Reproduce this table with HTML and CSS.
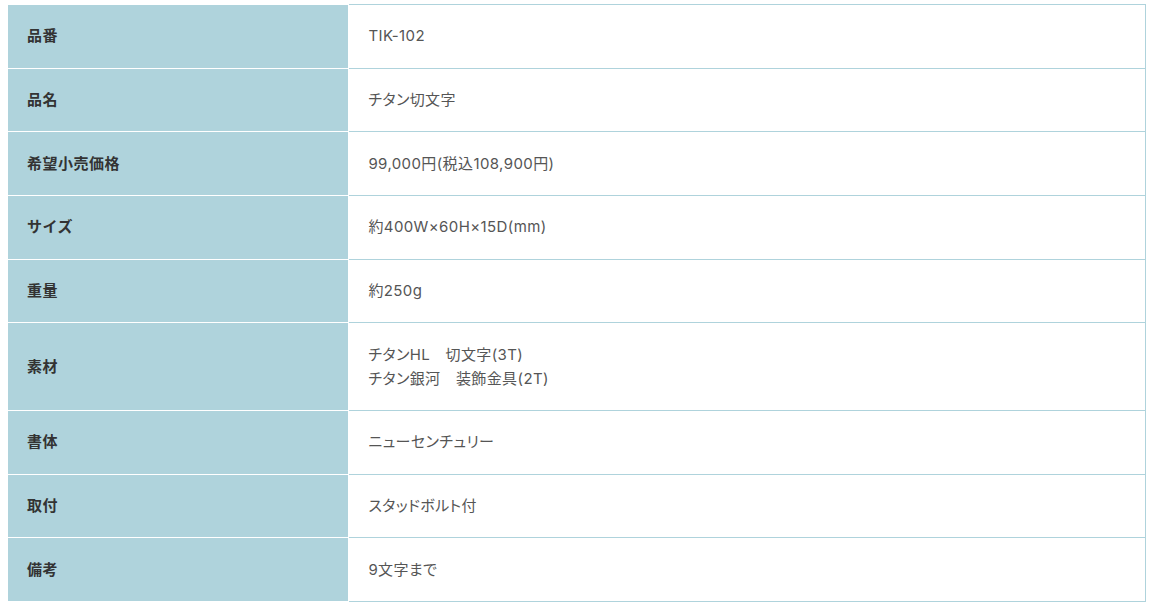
FILE: index.html
```html
<!DOCTYPE html>
<html lang="ja">
<head>
<meta charset="utf-8">
<title>仕様</title>
<link rel="stylesheet" href="styles.css">
</head>
<body>
<div class="wrap">
<table class="spec">
<tbody>
<tr><th>品番</th><td>TIK-102</td></tr>
<tr><th>品名</th><td>チタン切文字</td></tr>
<tr><th>希望小売価格</th><td>99,000円(税込108,900円)</td></tr>
<tr><th>サイズ</th><td>約400W×60H×15D(mm)</td></tr>
<tr><th>重量</th><td>約250g</td></tr>
<tr><th>素材</th><td>チタンHL　切文字(3T)<br>チタン銀河　装飾金具(2T)</td></tr>
<tr><th>書体</th><td>ニューセンチュリー</td></tr>
<tr><th>取付</th><td>スタッドボルト付</td></tr>
<tr><th>備考</th><td>9文字まで</td></tr>
</tbody>
</table>
</div>
</body>
</html>
```
FILE: styles.css
```css
html, body {
  margin: 0;
  padding: 0;
  background: #ffffff;
}
.wrap {
  padding: 4px 8px 0 7px;
}
.spec {
  width: 100%;
  border-collapse: collapse;
  font-family: "Inter", "Noto Sans CJK JP", sans-serif;
  font-size: 15px;
  line-height: 24px;
  color: #444444;
}
.spec th,
.spec td {
  padding: 19.33px 20px 19.33px 19px;
  text-align: left;
  vertical-align: middle;
}
.spec th {
  width: 30%;
  background: #afd3dc;
  border: 1px solid #ffffff;
  font-weight: bold;
  color: #333333;
  letter-spacing: 0.5px;
}
.spec td {
  background: #ffffff;
  border: 1px solid #afd3dc;
  font-weight: 400;
  color: #555555;
  letter-spacing: 0.4px;
  font-feature-settings: "palt" 1;
}
```
